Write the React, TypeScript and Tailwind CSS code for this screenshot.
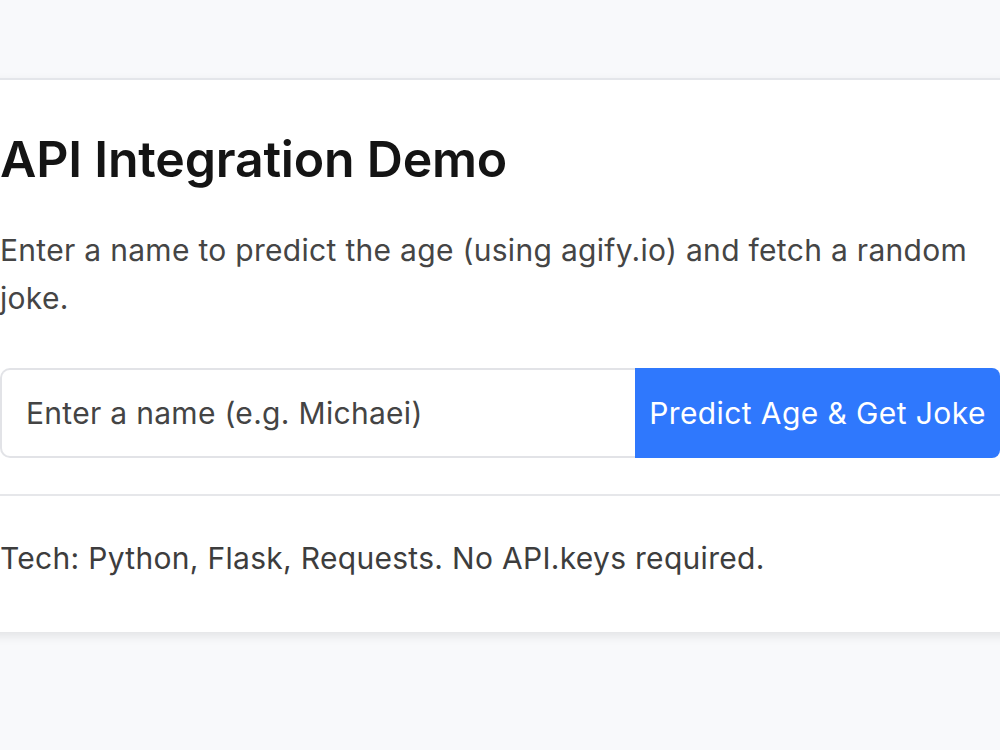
export default function App() {
  return (
    <div
      className="h-[750px] w-[1000px] overflow-hidden bg-[#f8f9fb] pt-[78px]"
      style={{ fontFamily: "Inter, 'Noto Sans', sans-serif" }}
    >
      <div className="-ml-[40px] w-[1080px] border-t-2 border-[#e4e6ea] bg-white px-[40px] pb-[52px] pt-[49px] shadow-[0_4px_10px_rgba(0,0,0,0.09)]">
        <h1 className="text-[50px] font-semibold leading-[60px] tracking-[-0.2px] text-[#141414]">
          API Integration Demo
        </h1>
        <p className="mt-[37px] text-[30px] leading-[48px] tracking-[0.3px] text-[#454545]">
          Enter a name to predict the age (using agify.io) and fetch a random joke.
        </p>
        <form className="mt-[46px] flex h-[90px]" onSubmit={(e) => e.preventDefault()}>
          <input
            className="min-w-0 flex-1 rounded-l-[10px] border-2 border-r-0 border-[#e2e3e7] px-[24px] text-[30px] tracking-[0.3px] text-[#333] outline-none placeholder:text-[#444]"
            placeholder="Enter a name (e.g. Michaei)"
          />
          <button
            type="submit"
            className="w-[365px] rounded-r-[8px] bg-[#2f78fd] text-[30px] tracking-[0.4px] text-white"
          >
            Predict Age &amp; Get Joke
          </button>
        </form>
        <hr className="mt-[36px] border-t-2 border-[#e6e7ea]" />
        <p className="mt-[40px] text-[30px] leading-[44px] tracking-[0.3px] text-[#3d3d3d]">
          Tech: Python, Flask, Requests. No API.keys required.
        </p>
      </div>
    </div>
  );
}
